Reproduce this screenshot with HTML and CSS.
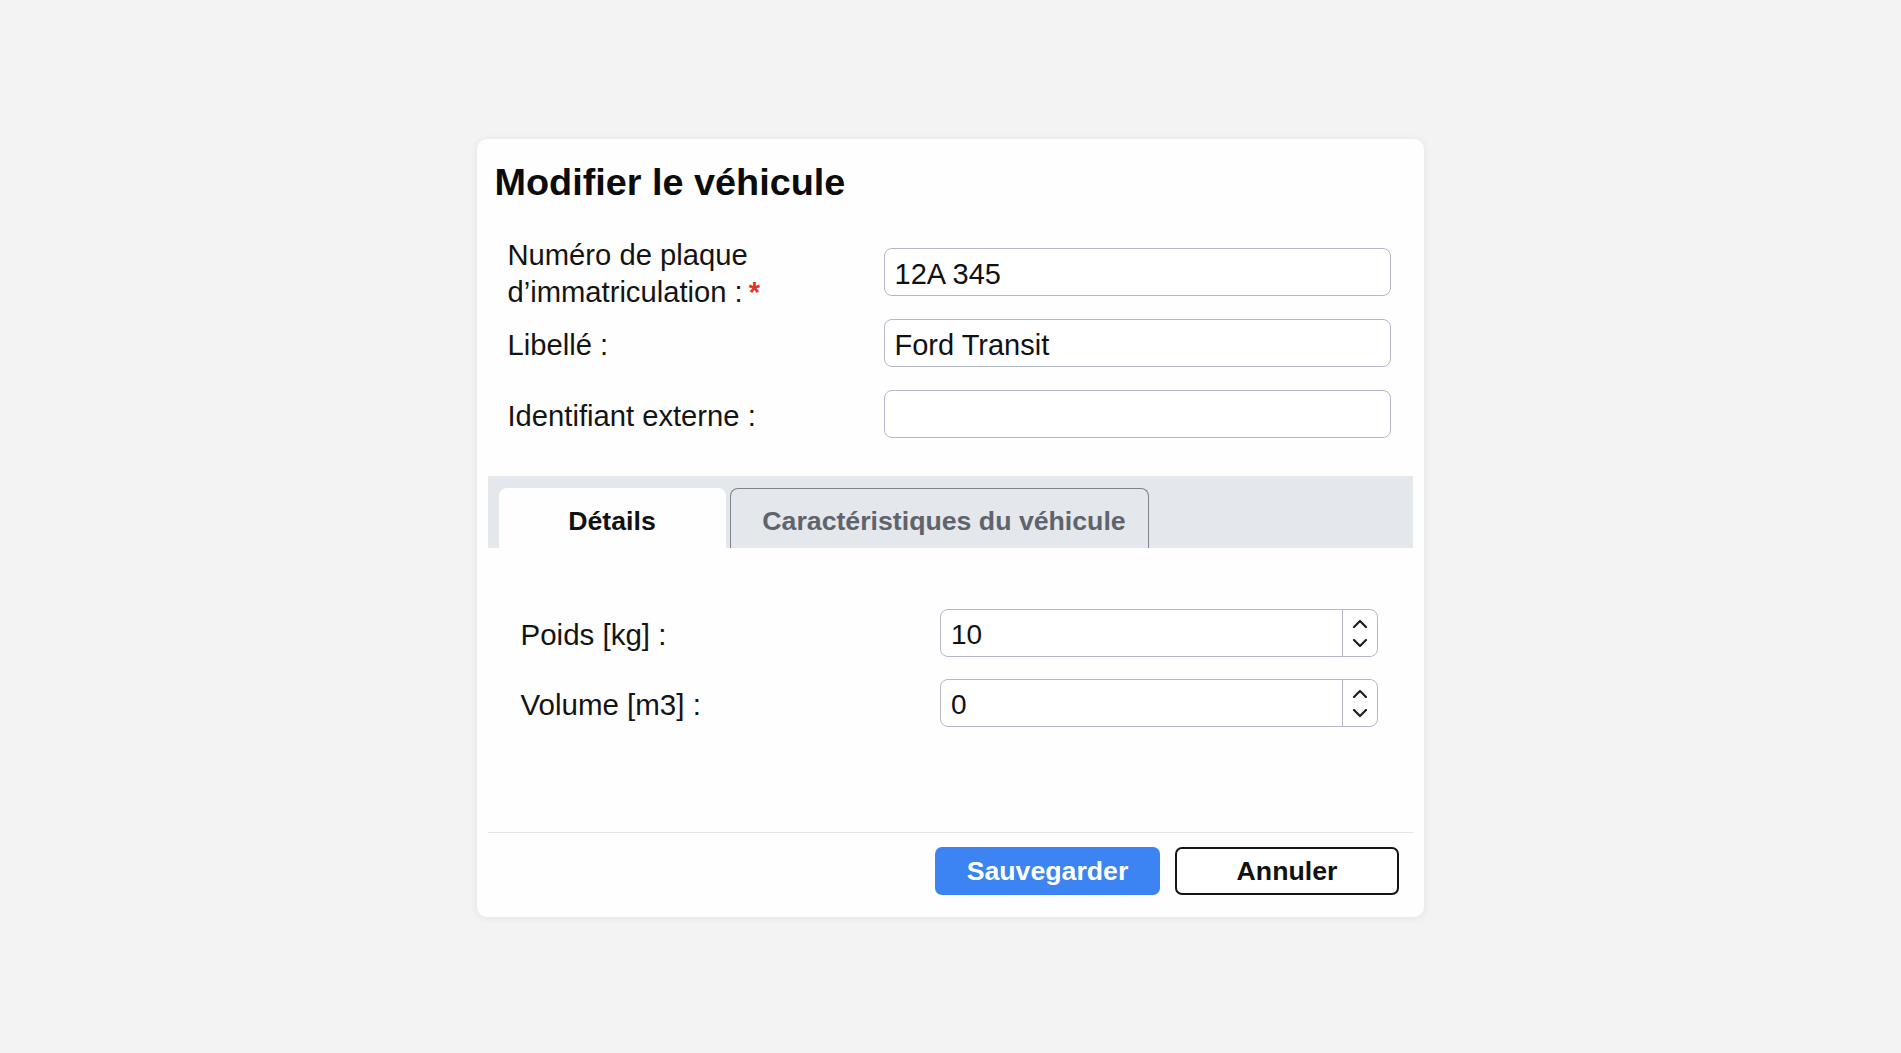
FILE: index.html
```html
<!DOCTYPE html>
<html lang="fr">
<head>
<meta charset="utf-8">
<title>Modifier le véhicule</title>
<link rel="stylesheet" href="styles.css">
</head>
<body>
<div class="dialog">
  <h1 class="title">Modifier le véhicule</h1>
  <div class="form">
    <div class="row">
      <label class="label">Numéro de plaque<br>d’immatriculation :<span class="req">*</span></label>
      <input class="field" type="text" value="12A 345">
    </div>
    <div class="row">
      <label class="label">Libellé :</label>
      <input class="field" type="text" value="Ford Transit">
    </div>
    <div class="row">
      <label class="label">Identifiant externe :</label>
      <input class="field" type="text" value="">
    </div>
  </div>

  <div class="tabs">
    <div class="tab active">Détails</div>
    <div class="tab inactive">Caractéristiques du véhicule</div>
  </div>

  <div class="panel">
    <div class="nrow">
      <label class="nlabel">Poids [kg] :</label>
      <div class="number">
        <input class="ninput" type="text" value="10">
        <div class="spin">
          <svg width="16" height="9" viewBox="0 0 16 9"><path d="M2 8 L8 2 L14 8" fill="none" stroke="#1f1f1f" stroke-width="2.2" stroke-linecap="round" stroke-linejoin="round"/></svg>
          <svg width="16" height="9" viewBox="0 0 16 9"><path d="M2 1 L8 7 L14 1" fill="none" stroke="#1f1f1f" stroke-width="2.2" stroke-linecap="round" stroke-linejoin="round"/></svg>
        </div>
      </div>
    </div>
    <div class="nrow">
      <label class="nlabel">Volume [m3] :</label>
      <div class="number">
        <input class="ninput" type="text" value="0">
        <div class="spin">
          <svg width="16" height="9" viewBox="0 0 16 9"><path d="M2 8 L8 2 L14 8" fill="none" stroke="#1f1f1f" stroke-width="2.2" stroke-linecap="round" stroke-linejoin="round"/></svg>
          <svg width="16" height="9" viewBox="0 0 16 9"><path d="M2 1 L8 7 L14 1" fill="none" stroke="#1f1f1f" stroke-width="2.2" stroke-linecap="round" stroke-linejoin="round"/></svg>
        </div>
      </div>
    </div>
  </div>

  <div class="footer">
    <button class="btn primary">Sauvegarder</button>
    <button class="btn secondary">Annuler</button>
  </div>
</div>
</body>
</html>
```

FILE: styles.css
```css
* { box-sizing: border-box; }

html, body {
  margin: 0;
  padding: 0;
  height: 100%;
}

body {
  background: #f3f3f3;
  font-family: "Liberation Sans", Arial, Helvetica, sans-serif;
  color: #111;
  display: flex;
  align-items: center;
  justify-content: center;
  padding-top: 3px;
}

.dialog {
  width: 947px;
  background: #fefefe;
  border-radius: 10px;
  box-shadow: 0 1px 8px rgba(0, 0, 0, 0.07);
  padding: 21px 11.5px 22px 10.5px;
}

.title {
  margin: 0;
  padding-left: 7px;
  font-size: 37.8px;
  line-height: 44px;
  font-weight: 700;
  color: #0c0c0c;
}

.form {
  margin-top: 44px;
  padding: 0 21.5px 0 20px;
  display: flex;
  flex-direction: column;
  gap: 23px;
}

.row {
  display: flex;
  align-items: center;
  height: 48px;
}

.label {
  width: 376px;
  flex: none;
  padding-top: 5px;
  font-size: 29.2px;
  line-height: 37px;
  color: #141414;
}

.req {
  color: #e3342b;
  margin-left: 6px;
  font-weight: 700;
}

.field {
  flex: 1;
  height: 48px;
  border: 1.5px solid #b4b7c7;
  border-radius: 8px;
  background: #fff;
  padding: 5px 10px 0;
  font-family: "Liberation Sans", Arial, Helvetica, sans-serif;
  font-size: 29px;
  color: #111;
  outline: none;
}

.tabs {
  margin-top: 38.5px;
  height: 72px;
  background: #e4e7eb;
  padding: 12px 0 0 11px;
  display: flex;
  gap: 4px;
}

.tab {
  height: 60px;
  padding-top: 7px;
  line-height: 53px;
  text-align: center;
  font-size: 26.7px;
  font-weight: 700;
  border-radius: 8px 8px 0 0;
}

.tab.active {
  width: 227px;
  background: #fefefe;
  color: #111;
}

.tab.inactive {
  width: 419px;
  background: #e4e7eb;
  color: #5f636c;
  border: 1.5px solid #7e838d;
  border-bottom: none;
  padding-top: 5.5px;
  padding-left: 10px;
}

.panel {
  height: 285px;
  padding: 61px 34.5px 0 33px;
  display: flex;
  flex-direction: column;
  gap: 22px;
  border-bottom: 1px solid #e2e5e9;
}

.nrow {
  display: flex;
  height: 48px;
  align-items: center;
}

.nlabel {
  width: 419.5px;
  flex: none;
  padding-top: 3px;
  font-size: 29.5px;
  line-height: 36px;
  color: #141414;
}

.number {
  flex: 1;
  height: 48px;
  display: flex;
  border: 1.5px solid #b4b7c7;
  border-radius: 8px;
  background: #fff;
  overflow: hidden;
}

.ninput {
  flex: 1;
  min-width: 0;
  border: none;
  background: transparent;
  padding: 3px 10px 0;
  font-family: "Liberation Sans", Arial, Helvetica, sans-serif;
  font-size: 28px;
  color: #111;
  outline: none;
}

.spin {
  width: 35px;
  flex: none;
  border-left: 1.5px solid #b4b7c7;
  display: flex;
  flex-direction: column;
  align-items: center;
  justify-content: center;
  gap: 11px;
}

.spin svg { display: block; }

.footer {
  padding: 14px 13.5px 0 0;
  display: flex;
  justify-content: flex-end;
  gap: 15px;
}

.btn {
  height: 48px;
  width: 224px;
  border-radius: 7px;
  font-family: "Liberation Sans", Arial, Helvetica, sans-serif;
  font-size: 26.7px;
  font-weight: 700;
  cursor: pointer;
}

.btn.primary {
  width: 225px;
  background: #3b84f1;
  border: none;
  color: #fff;
}

.btn.secondary {
  background: #fff;
  border: 2px solid #141414;
  color: #111;
}
```
